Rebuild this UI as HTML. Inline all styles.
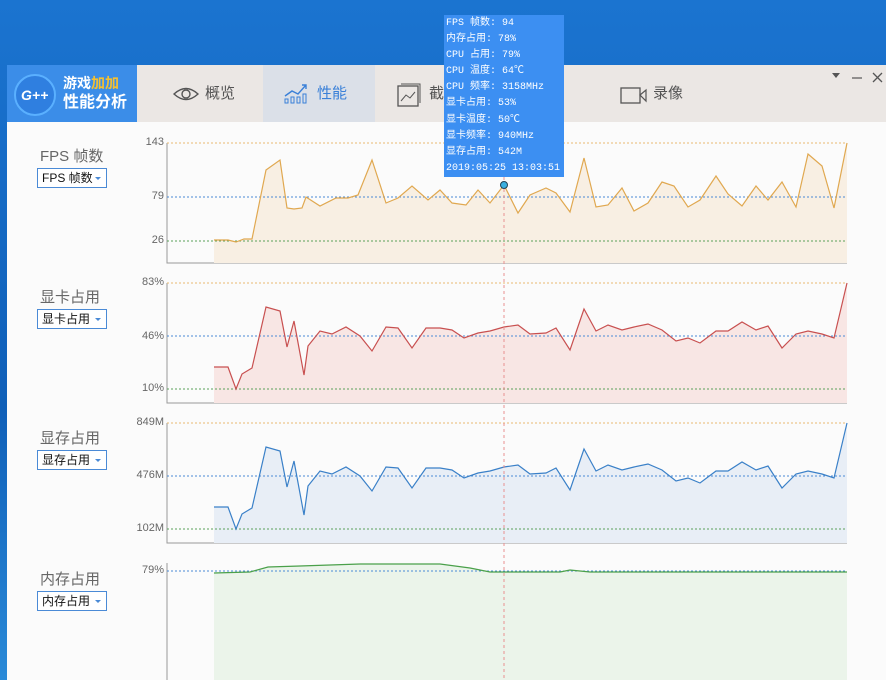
<!DOCTYPE html>
<html><head><meta charset="utf-8"><style>
*{margin:0;padding:0;box-sizing:border-box}
body{width:886px;height:680px;overflow:hidden;background:linear-gradient(180deg,#1b74d0 0%,#0f5fb8 60%,#2a8ad8 100%);font-family:"Liberation Sans","Noto Sans CJK SC",sans-serif;position:relative}
.win{position:absolute;left:7px;top:65px;width:879px;height:615px;background:#fbfbfb}
.bar{position:absolute;left:0;top:0;width:879px;height:57px;background:#ebe7e4}
.logo{position:absolute;left:0;top:0;width:130px;height:57px;background:#3b8de8}
.tab{position:absolute;top:0;height:57px;font-size:15px;color:#555;line-height:57px}
.lbl{position:absolute;left:33px;font-size:15px;color:#666}
.sel{position:absolute;left:30px;width:70px;height:20px;border:1px solid #4a8ad6;background:#fff;font-size:12px;color:#111;line-height:18px;padding-left:4px}
.sel:after{content:"";position:absolute;right:5px;top:8px;border:3px solid transparent;border-top:3px solid #4a8ad6}
.tip{position:absolute;left:444px;top:15px;width:120px;height:162px;background:#3c8ff2;color:#fff;font-family:"Liberation Mono","Noto Sans CJK SC",monospace;font-size:10px;line-height:16.1px;padding:1px 2px;white-space:nowrap;overflow:hidden}
.ax{position:absolute;font-size:11px;color:#666;text-align:right;width:40px}
</style></head><body>
<div class="win">
<div class="bar">
<div class="logo">
<svg width="130" height="57" style="position:absolute;left:0;top:0"><circle cx="28" cy="30" r="20" fill="#2f7fe0" stroke="#5ab0ff" stroke-width="2"/><text x="14" y="35" font-size="14" font-style="italic" font-weight="bold" fill="#fff" font-family="Liberation Sans">G++</text></svg>
<div style="position:absolute;left:56px;top:9px;color:#fff;font-size:14px;font-weight:bold;line-height:19px">游戏<span style="color:#f5c030">加加</span><br><span style="font-size:16px">性能分析</span></div>
</div>
<div class="tab" style="left:130px;width:126px"><svg style="position:absolute;left:36px;top:22px" width="26" height="14"><path d="M1 7 Q13 -4 25 7 Q13 18 1 7Z" fill="none" stroke="#555" stroke-width="1.4"/><circle cx="13" cy="7" r="4" fill="none" stroke="#555" stroke-width="1.4"/></svg><span style="position:absolute;left:68px">概览</span></div>
<div class="tab" style="left:256px;width:112px;background:#dbe0e8;color:#3a80d8"><svg style="position:absolute;left:20px;top:17px" width="26" height="22"><path d="M2 14 L9 9 L15 12 L23 3 M19 3 L23 3 L23 7" fill="none" stroke="#3a80d8" stroke-width="1.4"/><rect x="2" y="17" width="3" height="4" fill="none" stroke="#3a80d8"/><rect x="8" y="15" width="3" height="6" fill="none" stroke="#3a80d8"/><rect x="14" y="15" width="3" height="6" fill="none" stroke="#3a80d8"/><rect x="20" y="12" width="3" height="9" fill="none" stroke="#3a80d8"/></svg><span style="position:absolute;left:54px">性能</span></div>
<div class="tab" style="left:368px;width:100px"><svg style="position:absolute;left:22px;top:18px" width="24" height="24"><rect x="1" y="3" width="20" height="20" fill="none" stroke="#555" stroke-width="1.3"/><path d="M4 1 H23 V20" fill="none" stroke="#555"/><path d="M4 18 L9 12 L13 15 L18 9" fill="none" stroke="#555"/></svg><span style="position:absolute;left:54px">截图</span></div>
<div class="tab" style="left:500px;width:80px"><span style="position:absolute;left:20px">网络</span></div>
<div class="tab" style="left:600px;width:100px"><svg style="position:absolute;left:13px;top:22px" width="28" height="18"><rect x="1" y="1" width="19" height="15" fill="none" stroke="#555" stroke-width="1.3"/><path d="M20 8 L26 3 V14 Z" fill="none" stroke="#555" stroke-width="1.2"/></svg><span style="position:absolute;left:46px">录像</span></div>
<svg style="position:absolute;left:822px;top:5px" width="56" height="14"><path d="M3 3 H11 L7 8Z" fill="#555"/><path d="M23 8 H33" stroke="#555" stroke-width="1.2"/><path d="M44 3 L53 12 M53 3 L44 12" stroke="#555" stroke-width="1.3"/></svg>
</div>
<div class="lbl" style="top:80px">FPS 帧数</div><div class="sel" style="top:103px">FPS 帧数</div>
<div class="lbl" style="top:221px">显卡占用</div><div class="sel" style="top:244px">显卡占用</div>
<div class="lbl" style="top:362px">显存占用</div><div class="sel" style="top:385px">显存占用</div>
<div class="lbl" style="top:503px">内存占用</div><div class="sel" style="top:526px">内存占用</div>
</div>
<div class="ax" style="left:124px;top:136px">143</div><div class="ax" style="left:124px;top:190px">79</div><div class="ax" style="left:124px;top:234px">26</div>
<div class="ax" style="left:124px;top:276px">83%</div><div class="ax" style="left:124px;top:330px">46%</div><div class="ax" style="left:124px;top:382px">10%</div>
<div class="ax" style="left:124px;top:416px">849M</div><div class="ax" style="left:124px;top:469px">476M</div><div class="ax" style="left:124px;top:522px">102M</div>
<div class="ax" style="left:124px;top:564px">79%</div>
<svg width="886" height="680" style="position:absolute;left:0;top:0">
<defs>
<polyline id="g" points="214,367 228,367 236,389 242,374 252,368 266,307 280,311 287,347 294,321 304,375 308,346 320,331 332,334 346,327 360,336 372,351 386,327 398,328 412,348 426,328 440,328 452,330 464,338 478,333 490,331 504,327 518,325 530,334 546,333 556,328 570,350 584,309 596,331 608,325 622,330 634,327 648,324 662,330 676,341 688,338 700,343 716,331 728,331 742,322 756,330 768,326 782,348 796,334 808,331 822,334 834,338 847,283"/>
<polygon id="gf" points="214,403 214,367 228,367 236,389 242,374 252,368 266,307 280,311 287,347 294,321 304,375 308,346 320,331 332,334 346,327 360,336 372,351 386,327 398,328 412,348 426,328 440,328 452,330 464,338 478,333 490,331 504,327 518,325 530,334 546,333 556,328 570,350 584,309 596,331 608,325 622,330 634,327 648,324 662,330 676,341 688,338 700,343 716,331 728,331 742,322 756,330 768,326 782,348 796,334 808,331 822,334 834,338 847,283 847,403"/>
</defs>
<g stroke-width="1" fill="none">
<path d="M167 143 V263 H847 M167 283 V403 H847 M167 423 V543 H847 M167 563 V680" stroke="#999"/>
</g>
<polygon points="214,263 214,240 228,240 236,242 244,239 252,239 266,170 280,160 287,208 294,209 302,208 306,197 320,206 336,198 348,198 358,195 372,160 386,203 398,198 412,186 428,200 440,190 452,203 466,205 478,190 490,203 504,185 518,213 530,195 546,188 556,193 570,212 584,158 596,207 608,205 622,188 634,211 648,203 662,182 674,186 688,207 700,200 716,176 728,194 742,206 756,186 768,200 782,182 796,207 808,154 822,166 834,208 847,143 847,263" fill="#f8efe3" stroke="none"/>
<use href="#gf" fill="#f8e6e4" stroke="none"/>
<use href="#gf" transform="translate(0,140)" fill="#e8eef6" stroke="none"/>
<polygon points="214,680 214,573 250,572 268,567 300,566 360,564 440,564 470,568 490,572 560,572 570,570 590,572 847,572 847,680" fill="#ebf4ea"/>
<g stroke-width="1" fill="none" stroke-dasharray="2,2"><path d="M167 143 H847 M167 283 H847 M167 423 H847" stroke="#e8b870"/><path d="M167 197 H847 M167 336 H847 M167 476 H847 M167 571 H847" stroke="#4a8ad6"/><path d="M167 241 H847 M167 389 H847 M167 529 H847" stroke="#5aa05a"/></g>
<polyline points="214,240 228,240 236,242 244,239 252,239 266,170 280,160 287,208 294,209 302,208 306,197 320,206 336,198 348,198 358,195 372,160 386,203 398,198 412,186 428,200 440,190 452,203 466,205 478,190 490,203 504,185 518,213 530,195 546,188 556,193 570,212 584,158 596,207 608,205 622,188 634,211 648,203 662,182 674,186 688,207 700,200 716,176 728,194 742,206 756,186 768,200 782,182 796,207 808,154 822,166 834,208 847,143" fill="none" stroke="#e0a850" stroke-width="1.2"/>
<use href="#g" fill="none" stroke="#c85050" stroke-width="1.2"/>
<use href="#g" transform="translate(0,140)" fill="none" stroke="#3a80c8" stroke-width="1.2"/>
<polyline points="214,573 250,572 268,567 300,566 360,564 440,564 470,568 490,572 560,572 570,570 590,572 847,572" fill="none" stroke="#4aa04a" stroke-width="1.2"/>
<path d="M504 177 V680" stroke="#e89090" stroke-dasharray="3,3"/>
<circle cx="504" cy="185" r="3.5" fill="#3ab0e0" stroke="#245" stroke-width="1"/>
</svg>
<div class="tip">FPS 帧数: 94<br>内存占用: 78%<br>CPU 占用: 79%<br>CPU 温度: 64℃<br>CPU 频率: 3158MHz<br>显卡占用: 53%<br>显卡温度: 50℃<br>显卡频率: 940MHz<br>显存占用: 542M<br>2019:05:25 13:03:51</div>
</body></html>
